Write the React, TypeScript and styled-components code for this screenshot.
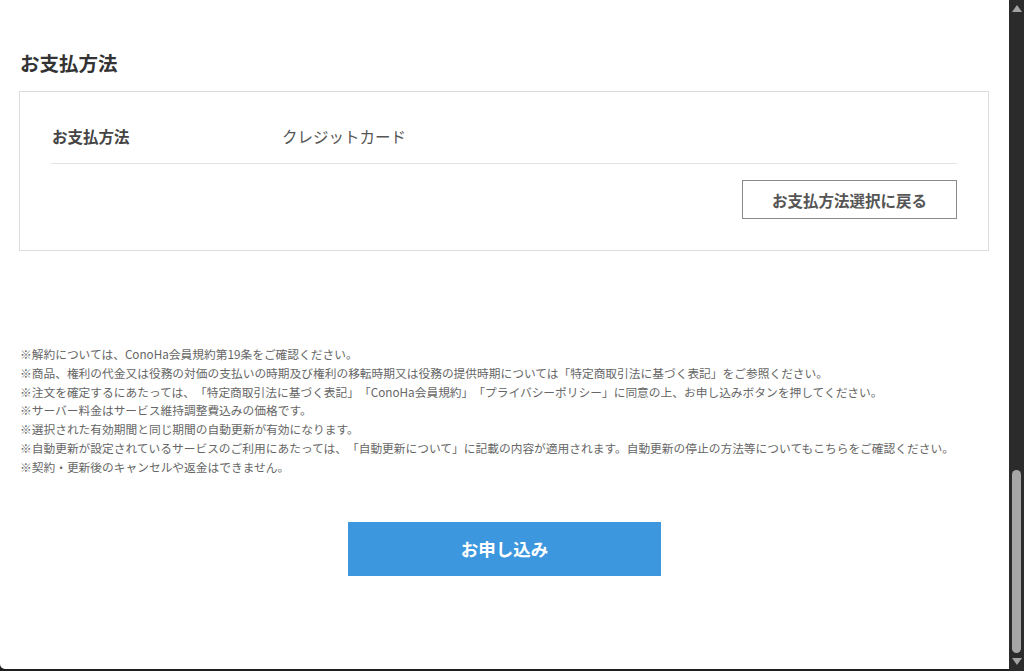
import React from "react";
import styled, { createGlobalStyle } from "styled-components";

const GlobalStyle = createGlobalStyle`
  html, body { margin: 0; padding: 0; background: #1e1e1e; }
  body {
    font-family: "Noto Sans CJK JP", "Noto Sans", sans-serif;
    text-spacing-trim: space-all;
  }
  * { box-sizing: border-box; }
`;

const Frame = styled.div`
  display: flex;
  width: 1024px;
  height: 671px;
  background: #1e1e1e;
  overflow: hidden;
`;

const Page = styled.main`
  flex: 1;
  height: 669px;
  background: #fff;
  border-bottom-left-radius: 5px;
  padding: 49px 20px 0 19px;
  display: flex;
  flex-direction: column;
  overflow: hidden;
`;

const Heading = styled.h2`
  margin: 0 0 14px 1px;
  font-size: 19.5px;
  line-height: 28px;
  font-weight: 700;
  color: #333;
`;

const Box = styled.section`
  border: 1px solid #dcdcdc;
  padding: 32px 31px 31px 31px;
  display: flex;
  flex-direction: column;
`;

const Row = styled.div`
  display: grid;
  grid-template-columns: 230px 1fr;
  align-items: center;
  padding: 0 0 15px 1px;
  border-bottom: 1px solid #e2e2e2;
`;

const Label = styled.div`
  font-size: 15.5px;
  line-height: 24px;
  font-weight: 700;
  color: #444;
`;

const Value = styled.div`
  font-size: 15.5px;
  line-height: 24px;
  color: #555;
`;

const Actions = styled.div`
  display: flex;
  justify-content: flex-end;
  margin-top: 16px;
`;

const OutlineButton = styled.button`
  width: 215px;
  height: 39px;
  border: 1px solid #8a8a8a;
  background: #fff;
  font-family: inherit;
  font-size: 15.5px;
  font-weight: 700;
  color: #555;
  cursor: pointer;
  padding: 0;
`;

const Notes = styled.ul`
  list-style: none;
  margin: 94px 0 0 1px;
  padding: 0;
`;

const Note = styled.li`
  font-size: 11.73px;
  line-height: 18.8px;
  color: #666;
  white-space: nowrap;
  text-spacing-trim: space-all;
`;

const SubmitWrap = styled.div`
  display: flex;
  justify-content: center;
  margin-top: 45px;
  padding-left: 1px;
`;

const SubmitButton = styled.button`
  width: 313px;
  height: 54px;
  border: none;
  background: #3c97de;
  color: #fff;
  font-family: inherit;
  font-size: 17.5px;
  font-weight: 700;
  cursor: pointer;
`;

const Scrollbar = styled.div`
  width: 15px;
  height: 671px;
  background: #2b2b2b;
  display: flex;
  flex-direction: column;
  align-items: center;
  padding: 5px 0 6px;
`;

const Arrow = styled.div<{ $down?: boolean }>`
  width: 0;
  height: 0;
  border-left: 5px solid transparent;
  border-right: 5px solid transparent;
  ${(p) =>
    p.$down
      ? "border-top: 7px solid #a3a3a3;"
      : "border-bottom: 7px solid #a3a3a3;"}
`;

const Track = styled.div`
  flex: 1;
  width: 100%;
  display: flex;
  flex-direction: column;
  justify-content: flex-end;
  align-items: center;
  padding: 0 0 5px;
`;

const Thumb = styled.div`
  width: 9px;
  height: 183px;
  border-radius: 4.5px;
  background: #a6a6a6;
`;

const notes = [
  "※解約については、ConoHa会員規約第19条をご確認ください。",
  "※商品、権利の代金又は役務の対価の支払いの時期及び権利の移転時期又は役務の提供時期については「特定商取引法に基づく表記」をご参照ください。",
  "※注文を確定するにあたっては、「特定商取引法に基づく表記」「ConoHa会員規約」「プライバシーポリシー」に同意の上、お申し込みボタンを押してください。",
  "※サーバー料金はサービス維持調整費込みの価格です。",
  "※選択された有効期間と同じ期間の自動更新が有効になります。",
  "※自動更新が設定されているサービスのご利用にあたっては、「自動更新について」に記載の内容が適用されます。自動更新の停止の方法等についてもこちらをご確認ください。",
  "※契約・更新後のキャンセルや返金はできません。",
];

export default function App() {
  return (
    <>
      <GlobalStyle />
      <Frame>
        <Page>
          <Heading>お支払方法</Heading>
          <Box>
            <Row>
              <Label>お支払方法</Label>
              <Value>クレジットカード</Value>
            </Row>
            <Actions>
              <OutlineButton>お支払方法選択に戻る</OutlineButton>
            </Actions>
          </Box>
          <Notes>
            {notes.map((n) => (
              <Note key={n}>{n}</Note>
            ))}
          </Notes>
          <SubmitWrap>
            <SubmitButton>お申し込み</SubmitButton>
          </SubmitWrap>
        </Page>
        <Scrollbar>
          <Arrow />
          <Track>
            <Thumb />
          </Track>
          <Arrow $down />
        </Scrollbar>
      </Frame>
    </>
  );
}
